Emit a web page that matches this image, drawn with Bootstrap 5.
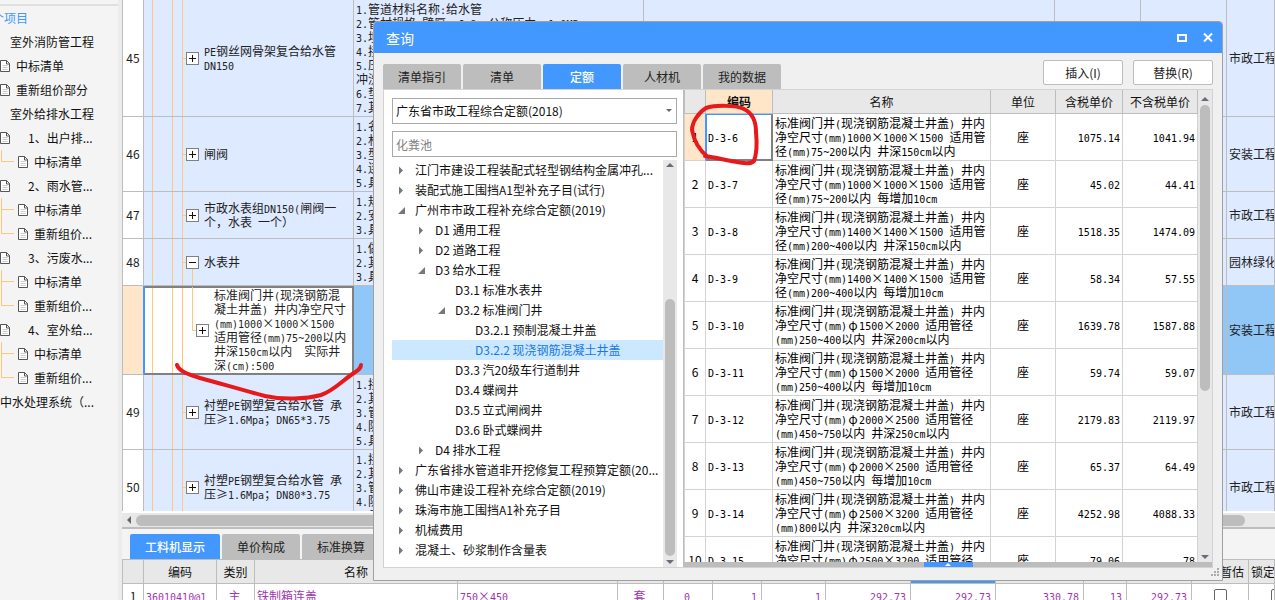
<!DOCTYPE html>
<html lang="zh-CN">
<head>
<meta charset="utf-8">
<meta name="viewport" content="width=device-width, initial-scale=1">
<title>工程计价 - 查询</title>
<link href="https://cdn.jsdelivr.net/npm/bootstrap@5.3.0/dist/css/bootstrap.min.css" rel="stylesheet">
<style>
:root{--line:#bdbdbd;--soft:#d3d3d3;--blue:#4398ff;--peach:#ffe6c8;--wire:#ffc880}
body{font:12px/16px "Noto Sans CJK SC",sans-serif;color:#111;background:#f4f4f4}
ul{list-style:none;margin:0;padding:0}
.latin{font-family:"DejaVu Sans Mono",monospace;font-size:10px;line-height:1px}
.wide{display:inline-block;width:12px;text-align:center;line-height:1px}
/* project tree */
.project{width:122px;background:#f4f4f4;border-right:4px solid #ececec;padding-top:4px}
.project ul{border-top:2px solid #e0e0e0}
.project a{display:flex;align-items:center;height:24px;color:inherit;text-decoration:none;white-space:nowrap;position:relative}
.project svg{width:12px;height:14px;flex:none}
.lv-root{margin-left:-8px}
.project a.lv-root{color:var(--blue)}
.lv-group{padding-left:10px}
.lv-doc{gap:5px;margin-left:-1px}
.lv-sub span{padding-left:12px}
.lv-leaf{gap:5px;padding-left:17px}
.lv-leaf::before{content:"";position:absolute;left:1px;top:0;width:13px;height:12px;border:solid var(--wire);border-width:0 0 1px 1px}
.lv-leaf.again::before{top:-12px;height:24px}
/* data grids */
.sheet{table-layout:fixed;border-collapse:separate;border-spacing:0;width:100%;line-height:14px}
.sheet th,.sheet td{border:solid var(--line);border-width:0 1px 1px 0;padding:2px;vertical-align:middle;overflow:hidden;white-space:pre}
.sheet th{background:#e8e8e8;font-weight:400;text-align:center}
.sheet tr>:first-child{border-left-width:1px;text-align:center;padding:2px 0}
.bill td{background-color:#deeaff;color:#222}
.bill tr>td:first-child{background-color:#fff}
.bill td.tree{padding-left:42px;background-image:linear-gradient(var(--wire),var(--wire)),linear-gradient(var(--wire),var(--wire)),linear-gradient(var(--wire),var(--wire));background-position:8px 0,28px 0,38px 0;background-size:1px 100%;background-repeat:no-repeat}
.bill .picked td{background-color:#91c7f7}
.bill .picked td:first-child{background-color:var(--peach);border-right-color:var(--blue)}
.bill .picked td.tree{padding-left:52px;background-color:#fff;border-color:#808080;box-shadow:inset 1px 0 var(--blue),inset -1px 0 #808080,inset 0 -1px #808080,inset 0 2px #808080}
.knob{position:relative;width:13px;height:13px;flex:none;padding:0;border:1px solid #808080;background:#fff}
.knob svg{display:block;width:11px;height:11px}
.knob::before{content:"";position:absolute;left:-5px;top:5px;width:4px;height:1px;background:var(--wire)}
.knob.open::after{content:"";position:absolute;left:5px;top:12px;width:1px;height:18px;background:var(--wire)}
.knob.child::after{content:"";position:absolute;left:-5px;bottom:5px;width:1px;height:44px;background:var(--wire)}
/* lower pane */
.detail{height:89px;background:#f4f4f4;border-top:2px solid #fff}
.hbar{height:16px;background:#e8e8e8;border-bottom:2px solid var(--line);padding:1px 0 1px 4px;gap:4px}
.hbar i{height:11px;width:1109px;max-width:100%;border-radius:6px;background:var(--line)}
.strip{padding:5px 0 0 8px;gap:2px;height:30px}
.tabbtn{border:0;background:var(--line);color:#222;height:25px;width:78px;padding:0;border-radius:2px 2px 0 0;text-align:center}
.tabbtn.on{background:var(--blue);color:#fff;font-weight:500}
.strip .on{width:90px}
.detail .sheet{border-top:1px solid var(--line)}
.detail tr{height:24px}
.detail td{background:#fff;color:#a035b0;text-align:right;padding-right:4px}
.detail td:first-child{color:#1a1a1a}
.detail .hot{box-shadow:inset 0 -2px var(--blue)}
.detail input{appearance:none;width:13px;height:13px;border:1px solid #666;border-radius:2px;background:#fff;display:block;margin:0 0 0 20px}
/* query window */
.query{position:absolute;inset:21px 52px 19px 373px;background:#f0f0f0;border:1px solid #a0a0a0;border-radius:4px 4px 0 0;overflow:hidden}
.titlebar{height:31px;background:var(--blue);color:#fff;padding:0 6px 0 12px;font-size:14px;gap:10px}
.titlebar button{border:0;background:none;padding:0;width:16px;height:16px}
.titlebar svg{display:block;margin:auto}
.tools{height:36px;padding:0 9px}
.tools .push{width:80px;height:25px;border:1px solid var(--line);border-radius:2px;background:#fff;color:#222;padding:0;margin-top:7px}
.panes{margin:0 9px 12px;border:1px solid var(--soft);background:#fff}
.finder{width:300px;padding:8px 6px 0 8px;border-right:1px solid var(--line)}
.field{position:relative;height:26px;margin-bottom:7px}
.field select,.field input{width:100%;height:26px;border:1px solid #aaa;border-radius:0;background:#fff;padding:0 3px;appearance:none;color:#111;font:inherit;outline:0}
.field input::placeholder{color:#808080;opacity:1}
.field svg{position:absolute;right:5px;top:11px;pointer-events:none}
.outline{margin-top:-4px}
.outline li{height:20px;display:flex;align-items:center;white-space:nowrap;color:#111}
.outline li.sel{background:#cce8ff;color:#1a78e6}
.outline svg{width:9px;height:9px;flex:none;margin-right:9px}
.outline .vbar svg{width:8px;height:4px;margin:0}
.outline li{padding-left:5px}
.outline .l2{padding-left:25px}
.outline .l3{padding-left:45px}
.outline .l4{padding-left:65px}
.leafpad{width:18px;flex:none}
.vbar{width:14px;background:#e8e8e8;padding:3px 2px;gap:4px}
.vbar i{width:10px;border-radius:5px;background:var(--line)}
.quota td{border-color:var(--soft);color:#000;background:#fff}
.quota tr{height:24px}
.quota .key{background:var(--peach);font-weight:700}
.quota .now td:first-child{background:var(--peach)}
.quota .now td:nth-child(2){box-shadow:inset 1px 0 var(--blue),inset 0 1px var(--blue),inset -1px 0 #808080,inset 0 -1px #808080;border-color:#808080}
.quota .now td:first-child{border-right-color:var(--blue)}
.quota td:nth-child(4){text-align:center}
.quota td:nth-child(n+5){text-align:right}
.split{height:5px;background:var(--line)}
.split button{width:49px;height:5px;border:0;padding:0;background:var(--blue)}
.split svg{display:block;margin:auto}
.grip{position:absolute;right:3px;bottom:4px}
.ink{position:absolute;left:0;top:0;pointer-events:none}
</style>
</head>
<body>
<svg width="0" height="0" class="position-absolute" aria-hidden="true">
  <symbol id="doc" viewBox="0 0 12 14"><path d="M1.500 1.500h6l3 3v8h-9z" fill="#fff" stroke="#555"/><path d="M7.500 1.500v3.500h3.500" fill="none" stroke="#555"/><path d="M3.500 6.500h5M3.500 8.500h5M3.500 10.500h5" stroke="#ccc"/></symbol>
  <symbol id="plus" viewBox="0 0 11 11"><path d="M2 5.500h7M5.500 2v7" stroke="#111"/></symbol>
  <symbol id="minus" viewBox="0 0 11 11"><path d="M2 5.500h7" stroke="#111"/></symbol>
  <symbol id="shut" viewBox="0 0 9 9"><path d="M2 .5l4 4-4 4z" fill="#777"/></symbol>
  <symbol id="down" viewBox="0 0 9 9"><path d="M8 1v7h-7z" fill="#777"/></symbol>
  <symbol id="tri" viewBox="0 0 8 4"><path d="M0 4l4-4 4 4z" fill="#6b6b78"/></symbol>
</svg>

<div class="d-flex vh-100 overflow-hidden position-relative">
  <nav class="project flex-shrink-0 overflow-hidden" aria-label="项目">
    <ul>
      <li><a href="#" class="lv-root">个项目</a></li>
      <li><a href="#" class="lv-group">室外消防管工程</a></li>
      <li><a href="#" class="lv-doc"><svg><use href="#doc"/></svg>中标清单</a></li>
      <li><a href="#" class="lv-doc"><svg><use href="#doc"/></svg>重新组价部分</a></li>
      <li><a href="#" class="lv-group">室外给排水工程</a></li>
      <li><a href="#" class="lv-doc lv-sub"><svg><use href="#doc"/></svg><span>1、出户排...</span></a></li>
      <li><a href="#" class="lv-leaf"><svg><use href="#doc"/></svg>中标清单</a></li>
      <li><a href="#" class="lv-doc lv-sub"><svg><use href="#doc"/></svg><span>2、雨水管...</span></a></li>
      <li><a href="#" class="lv-leaf"><svg><use href="#doc"/></svg>中标清单</a></li>
      <li><a href="#" class="lv-leaf again"><svg><use href="#doc"/></svg>重新组价...</a></li>
      <li><a href="#" class="lv-doc lv-sub"><svg><use href="#doc"/></svg><span>3、污废水...</span></a></li>
      <li><a href="#" class="lv-leaf"><svg><use href="#doc"/></svg>中标清单</a></li>
      <li><a href="#" class="lv-leaf again"><svg><use href="#doc"/></svg>重新组价...</a></li>
      <li><a href="#" class="lv-doc lv-sub"><svg><use href="#doc"/></svg><span>4、室外给...</span></a></li>
      <li><a href="#" class="lv-leaf"><svg><use href="#doc"/></svg>中标清单</a></li>
      <li><a href="#" class="lv-leaf again"><svg><use href="#doc"/></svg>重新组价...</a></li>
      <li><a href="#">中水处理系统（...</a></li>
    </ul>
  </nav>

  <main class="d-flex flex-column flex-grow-1 overflow-hidden">
    <div class="flex-grow-1 overflow-hidden">
      <table class="sheet bill">
        <colgroup><col style="width:22px"><col style="width:210px"><col style="width:290px"><col style="width:411px"><col style="width:86px"><col style="width:86px"><col></colgroup>
        <tbody id="bill"></tbody>
      </table>
    </div>
    <section class="detail flex-shrink-0 overflow-hidden">
      <div class="hbar d-flex align-items-center"><svg width="6" height="8" viewBox="0 0 6 8"><path d="M5 0v8l-4-4z" fill="#666"/></svg><i></i></div>
      <div class="strip d-flex">
        <button type="button" class="tabbtn on">工料机显示</button>
        <button type="button" class="tabbtn">单价构成</button>
        <button type="button" class="tabbtn">标准换算</button>
      </div>
      <table class="sheet">
        <colgroup><col style="width:22px"><col style="width:73px"><col style="width:38px"><col style="width:203px"><col style="width:160px"><col style="width:46px"><col style="width:49px"><col style="width:49px"><col style="width:64px"><col style="width:85px"><col style="width:85px"><col style="width:88px"><col style="width:43px"><col style="width:65px"><col style="width:57px"><col></colgroup>
        <thead><tr><th></th><th>编码</th><th>类别</th><th>名称</th><th></th><th></th><th></th><th></th><th></th><th></th><th class="hot"></th><th></th><th></th><th></th><th>是否暂估</th><th class="text-start">锁定</th></tr></thead>
        <tbody><tr><td>1</td><td class="text-start" data-t>36010410@1</td><td class="text-center">主</td><td class="text-start">铁制箱连盖</td><td class="text-start" data-t>750×450</td><td class="text-center">套</td><td class="text-center" data-t>0</td><td data-t>1</td><td data-t>1</td><td data-t>292.73</td><td data-t>292.73</td><td data-t>330.78</td><td data-t>13</td><td data-t>292.73</td><td><input type="checkbox" aria-label="暂估"></td><td><input type="checkbox" aria-label="锁定"></td></tr></tbody>
      </table>
    </section>
  </main>

  <section class="query d-flex flex-column" role="dialog" aria-label="查询">
    <header class="titlebar d-flex align-items-center flex-shrink-0">
      <span class="flex-grow-1">查询</span>
      <button type="button" aria-label="最大化"><svg width="10" height="8" viewBox="0 0 10 8"><path d="M1 1h8v6h-8z" fill="none" stroke="#fff" stroke-width="2"/></svg></button>
      <button type="button" aria-label="关闭"><svg width="10" height="9" viewBox="0 0 10 9"><path d="M1 .5l8 8M9 .5l-8 8" stroke="#fff" stroke-width="2"/></svg></button>
    </header>
    <div class="tools d-flex flex-shrink-0">
      <div class="d-flex align-items-end flex-grow-1" style="gap:2px">
        <button type="button" class="tabbtn">清单指引</button>
        <button type="button" class="tabbtn">清单</button>
        <button type="button" class="tabbtn on">定额</button>
        <button type="button" class="tabbtn">人材机</button>
        <button type="button" class="tabbtn">我的数据</button>
      </div>
      <button type="button" class="push">插入(I)</button>
      <button type="button" class="push" style="margin-left:10px">替换(R)</button>
    </div>
    <div class="panes d-flex flex-grow-1 overflow-hidden">
      <div class="finder d-flex flex-column flex-shrink-0">
        <div class="field flex-shrink-0"><select aria-label="定额库"><option>广东省市政工程综合定额(2018)</option></select><svg width="6" height="4" viewBox="0 0 6 4"><path d="M0 0h6l-3 3z" fill="#666"/></svg></div>
        <div class="field flex-shrink-0"><input type="text" placeholder="化粪池" aria-label="搜索"></div>
        <div class="outline d-flex flex-grow-1 overflow-hidden">
          <ul class="flex-grow-1 overflow-hidden" id="outline"></ul>
          <div class="vbar d-flex flex-column align-items-center flex-shrink-0">
            <svg><use href="#tri"/></svg><span style="flex:124"></span><i style="flex:257"></i><svg style="transform:rotate(180deg)"><use href="#tri"/></svg>
          </div>
        </div>
      </div>
      <div class="d-flex flex-column flex-grow-1 overflow-hidden">
        <div class="d-flex flex-grow-1 overflow-hidden">
          <div class="flex-grow-1 overflow-hidden">
            <table class="sheet quota">
              <colgroup><col style="width:22px"><col style="width:67px"><col><col style="width:65px"><col style="width:67px"><col style="width:75px"></colgroup>
              <thead><tr><th></th><th class="key">编码</th><th>名称</th><th>单位</th><th>含税单价</th><th>不含税单价</th></tr></thead>
              <tbody id="quota"></tbody>
            </table>
          </div>
          <div class="vbar d-flex flex-column align-items-center flex-shrink-0">
            <svg width="8" height="4" class="mt-1 flex-shrink-0"><use href="#tri"/></svg><i style="flex:285"></i><span style="flex:155"></span><svg width="8" height="4" class="flex-shrink-0" style="transform:rotate(180deg)"><use href="#tri"/></svg>
          </div>
        </div>
        <div class="split d-flex justify-content-center flex-shrink-0"><button type="button" aria-label="展开"><svg width="6" height="3" viewBox="0 0 6 3"><path d="M0 3l3-3 3 3z" fill="#fff"/></svg></button></div>
      </div>
    </div>
    <svg class="grip" width="8" height="8" viewBox="0 0 8 8" fill="#aaa"><path d="M6 0h2v2h-2zM3 3h2v2h-2zM6 3h2v2h-2zM0 6h2v2h-2zM3 6h2v2h-2zM6 6h2v2h-2z"/></svg>
  </section>

  <svg class="ink" width="800" height="420" viewBox="0 0 800 420" fill="none" stroke="#e8191c" stroke-linecap="round" stroke-linejoin="round" aria-hidden="true">
    <path stroke-width="4" d="M177 365C179 371 187 374 200 378C222 384 246 391 265 396C283 400 306 399 321 395C333 391 341 382 351 375C357 371 361 369 361 365"/>
    <path stroke-width="4" d="M708 157C700 151 694 141 692 130C692 122 699 112 706 108C715 105 736 105 744 109C752 113 756 121 756 132C757 142 757 153 754 161C750 165 742 163 731 161C721 159 713 157 705 156"/>
  </svg>
</div>

<script>
// Half-width runs get the 6px monospaced face; symbols that take a full cell get a 12px box.
const cells = s => s.replace(/[\x20-\x7e]+|[×φ≥]/g, m => /[×φ≥]/.test(m) ? `<span class="wide">${m}</span>` : `<span class="latin">${m}</span>`);

const bill = [
  [45, 'PE钢丝网骨架复合给水管\nDN150', '1.管道材料名称:给水管\n2.管材规格:壁厚: 6.8  公称压力 :1.0MPa\n3.埋\n4.接\n5.压\n冲洗\n6.垫\n7.其', '市政工程'],
  [46, '闸阀', '1.名\n2.材\n3.型\n4.连\n5.具', '安装工程'],
  [47, '市政水表组DN150(闸阀一\n个，水表 一个）', '1.规\n2.安\n3.具', '市政工程'],
  [48, '水表井', '1.做\n2.其\n3.具', '园林绿化', 'open'],
  ['', '标准阀门井(现浇钢筋混\n凝土井盖) 井内净空尺寸\n(mm)1000×1000×1500\n适用管径(mm)75~200以内\n井深150cm以内  实际井\n深(cm):500', '', '安装工程', 'child'],
  [49, '衬塑PE钢塑复合给水管 承\n压≥1.6Mpa；DN65*3.75', '1.接\n2.其\n3.管\n4.防\n5.具', '市政工程'],
  [50, '衬塑PE钢塑复合给水管 承\n压≥1.6Mpa；DN80*3.75', '1.接\n2.其\n3.管\n4.防\n5.具', '市政工程']
];
document.getElementById('bill').innerHTML = bill.map(([n, name, note, kind, state = '']) =>
  `<tr${state === 'child' ? ' class="picked"' : ''}><td>${n}</td><td class="tree"><div class="d-flex align-items-center"><button type="button" class="knob ${state}" aria-label="展开"><svg><use href="#${state === 'open' ? 'minus' : 'plus'}"/></svg></button><span style="margin-left:5px">${cells(name)}</span></div></td><td>${cells(note)}</td><td></td><td></td><td></td><td>${kind}</td></tr>`).join('');

const outline = [
  [1, 'shut', '江门市建设工程装配式轻型钢结构金属冲孔...'], [1, 'shut', '装配式施工围挡A1型补充子目(试行)'],
  [1, 'down', '广州市市政工程补充综合定额(2019)'], [2, 'shut', 'D1 通用工程'], [2, 'shut', 'D2 道路工程'],
  [2, 'down', 'D3 给水工程'], [3, '', 'D3.1 标准水表井'], [3, 'down', 'D3.2 标准阀门井'],
  [4, '', 'D3.2.1 预制混凝土井盖'], [4, '', 'D3.2.2 现浇钢筋混凝土井盖', 'sel'], [3, '', 'D3.3 汽20级车行道制井'],
  [3, '', 'D3.4 蝶阀井'], [3, '', 'D3.5 立式闸阀井'], [3, '', 'D3.6 卧式蝶阀井'], [2, 'shut', 'D4 排水工程'],
  [1, 'shut', '广东省排水管道非开挖修复工程预算定额(20...'], [1, 'shut', '佛山市建设工程补充综合定额(2019)'],
  [1, 'shut', '珠海市施工围挡A1补充子目'], [1, 'shut', '机械费用'], [1, 'shut', '混凝土、砂浆制作含量表']
];
document.getElementById('outline').innerHTML = outline.map(([lv, mark, text, sel = '']) =>
  `<li class="l${lv} ${sel}">${mark ? `<svg><use href="#${mark}"/></svg>` : '<span class="leafpad"></span>'}${text}</li>`).join('');

const head = '标准阀门井(现浇钢筋混凝土井盖) 井内\n净空尺寸(mm)';
const quota = [
  ['1000×1000×1500 适用管\n径(mm)75~200以内 井深150cm以内', '1075.14', '1041.94'],
  ['1000×1000×1500 适用管\n径(mm)75~200以内 每增加10cm', '45.02', '44.41'],
  ['1400×1400×1500 适用管\n径(mm)200~400以内 井深150cm以内', '1518.35', '1474.09'],
  ['1400×1400×1500 适用管\n径(mm)200~400以内 每增加10cm', '58.34', '57.55'],
  ['φ1500×2000 适用管径\n(mm)250~400以内 井深200cm以内', '1639.78', '1587.88'],
  ['φ1500×2000 适用管径\n(mm)250~400以内 每增加10cm', '59.74', '59.07'],
  ['φ2000×2500 适用管径\n(mm)450~750以内 井深250cm以内', '2179.83', '2119.97'],
  ['φ2000×2500 适用管径\n(mm)450~750以内 每增加10cm', '65.37', '64.49'],
  ['φ2500×3200 适用管径\n(mm)800以内 井深320cm以内', '4252.98', '4088.33'],
  ['φ2500×3200 适用管径\n(mm)800以内 每增加10cm', '79.06', '78']
];
document.getElementById('quota').innerHTML = quota.map(([text, a, b], i) =>
  `<tr${i ? '' : ' class="now"'}><td>${i + 1}</td><td>${cells('D-3-' + (i + 6))}</td><td>${cells(head + text)}</td><td>座</td><td>${cells(a)}</td><td>${cells(b)}</td></tr>`).join('');

document.querySelectorAll('[data-t]').forEach(el => el.innerHTML = cells(el.textContent));
</script>
<script src="https://cdn.jsdelivr.net/npm/bootstrap@5.3.0/dist/js/bootstrap.bundle.min.js"></script>
</body>
</html>
